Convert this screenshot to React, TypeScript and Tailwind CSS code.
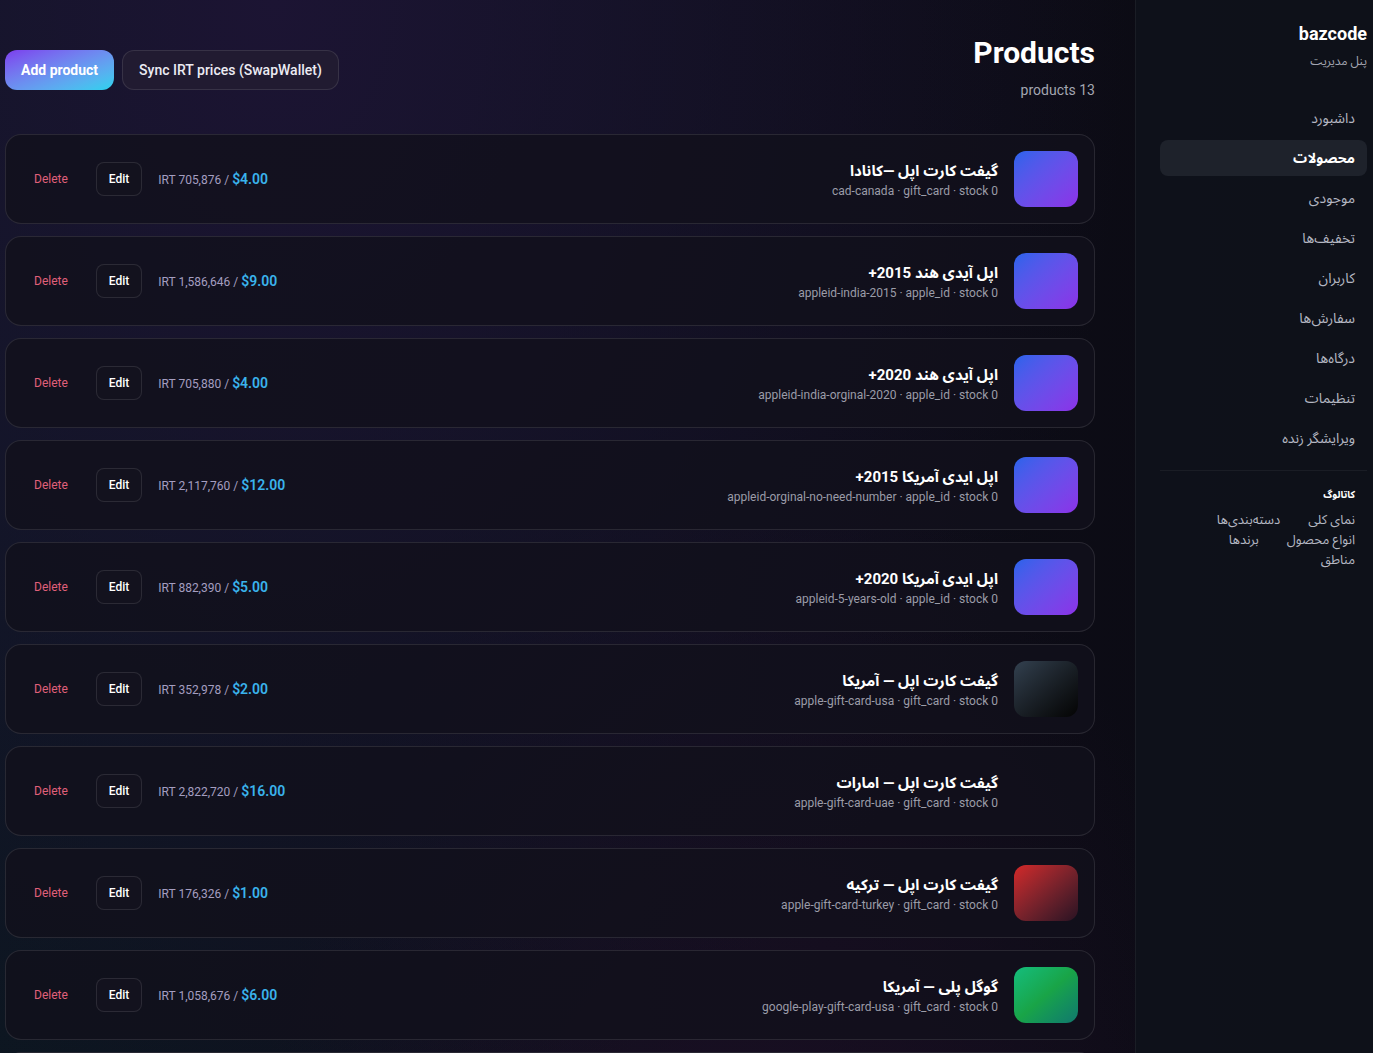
import React from 'react';

type Product = {
  title: string;
  slug: string;
  type: string;
  irt: string;
  usd: string;
  thumb: string | null;
};

const blue = 'bg-linear-to-br from-[#2563eb] to-[#8b31e8]';
const dark = 'bg-linear-to-br from-[#334150] to-[#050505]';
const red = 'bg-linear-to-br from-[#d42828] to-[#2a1222]';
const green = 'bg-linear-to-br from-[#15bd7c] via-[#19a447] to-[#12786c]';

const products: Product[] = [
  { title: 'گیفت کارت اپل —کانادا', slug: 'cad-canada', type: 'gift_card', irt: '705,876', usd: '$4.00', thumb: blue },
  { title: 'اپل آیدی هند 2015+', slug: 'appleid-india-2015', type: 'apple_id', irt: '1,586,646', usd: '$9.00', thumb: blue },
  { title: 'اپل آیدی هند 2020+', slug: 'appleid-india-orginal-2020', type: 'apple_id', irt: '705,880', usd: '$4.00', thumb: blue },
  { title: 'اپل ایدی آمریکا 2015+', slug: 'appleid-orginal-no-need-number', type: 'apple_id', irt: '2,117,760', usd: '$12.00', thumb: blue },
  { title: 'اپل ایدی آمریکا 2020+', slug: 'appleid-5-years-old', type: 'apple_id', irt: '882,390', usd: '$5.00', thumb: blue },
  { title: 'گیفت کارت اپل — آمریکا', slug: 'apple-gift-card-usa', type: 'gift_card', irt: '352,978', usd: '$2.00', thumb: dark },
  { title: 'گیفت کارت اپل — امارات', slug: 'apple-gift-card-uae', type: 'gift_card', irt: '2,822,720', usd: '$16.00', thumb: null },
  { title: 'گیفت کارت اپل — ترکیه', slug: 'apple-gift-card-turkey', type: 'gift_card', irt: '176,326', usd: '$1.00', thumb: red },
  { title: 'گوگل پلی — آمریکا', slug: 'google-play-gift-card-usa', type: 'gift_card', irt: '1,058,676', usd: '$6.00', thumb: green },
  { title: 'گوگل پلی — ترکیه', slug: 'google-play-gift-card-turkey', type: 'gift_card', irt: '352,978', usd: '$2.00', thumb: green },
  { title: 'استیم — آمریکا', slug: 'steam-gift-card-usa', type: 'gift_card', irt: '882,390', usd: '$5.00', thumb: dark },
  { title: 'پلی استیشن — آمریکا', slug: 'psn-gift-card-usa', type: 'gift_card', irt: '1,764,780', usd: '$10.00', thumb: blue },
  { title: 'ایکس باکس — آمریکا', slug: 'xbox-gift-card-usa', type: 'gift_card', irt: '1,764,780', usd: '$10.00', thumb: green },
];

const nav = ['داشبورد', 'محصولات', 'موجودی', 'تخفیف‌ها', 'کاربران', 'سفارش‌ها', 'درگاه‌ها', 'تنظیمات', 'ویرایشگر زنده'];
const catalog = ['نمای کلی', 'دسته‌بندی‌ها', 'انواع محصول', 'برندها', 'مناطق'];

function ProductRow({ p }: { p: Product }) {
  return (
    <div className="flex items-center justify-between rounded-2xl border border-white/10 bg-[#11101c]/80 p-4">
      <div className="flex items-center gap-4">
        <div className={`h-14 w-16 shrink-0 rounded-xl ${p.thumb ?? ''}`} />
        <div>
          <div className="text-[15px] font-bold leading-6 text-white">{p.title}</div>
          <div className="text-xs leading-4 text-[#9b9ca8]">
            {p.slug} · {p.type} · stock 0
          </div>
        </div>
      </div>
      <div dir="ltr" className="flex items-center gap-4">
        <button className="px-3 py-2 text-xs text-[#e0607a]">Delete</button>
        <button className="rounded-lg border border-white/10 bg-[#13121e] px-3 py-2 text-xs font-medium text-white">Edit</button>
        <div className="text-xs text-[#a49ec0]">
          IRT {p.irt} / <span className="text-sm font-semibold text-[#3ab3ec]">{p.usd}</span>
        </div>
      </div>
    </div>
  );
}

export default function App() {
  return (
    <div
      dir="rtl"
      className="flex min-h-screen bg-[radial-gradient(ellipse_at_20%_0%,#1c1433_0%,transparent_55%),radial-gradient(ellipse_at_55%_100%,#1e0f27_0%,transparent_50%),linear-gradient(to_right,#0c1620,#0d0d18_60%,#0b0a12)] font-['Roboto','Noto_Sans_Arabic','DejaVu_Sans',sans-serif]"
    >
      <aside className="w-[238px] shrink-0 border-l border-white/5 bg-[#0e121b]/90 pl-6 pr-[6px] pt-5">
        <div className="text-right">
          <div className="text-lg font-bold leading-7 text-white">bazcode</div>
          <div className="mt-[5px] text-xs text-[#a3a6b1]">پنل مدیریت</div>
        </div>
        <nav className="mt-[31px] space-y-1">
          {nav.map((item) => (
            <div
              key={item}
              className={`rounded-lg px-3 py-2 text-sm ${item === 'محصولات' ? 'bg-[#1e222b] font-bold text-white' : 'text-[#b4b7c2]'}`}
            >
              {item}
            </div>
          ))}
        </nav>
        <div className="mt-3.5 border-t border-white/5 pt-4">
          <div className="px-3 text-[10px] font-bold text-white">کاتالوگ</div>
          <div className="mt-2 flex flex-wrap gap-x-1">
            {catalog.map((c) => (
              <span key={c} className="px-3 text-[13px] leading-5 text-[#b4b7c2]">
                {c}
              </span>
            ))}
          </div>
        </div>
      </aside>

      <main className="flex-1 pb-10 pl-[5px] pr-10 pt-[35px]">
        <div className="flex items-start justify-between">
          <div>
            <h1 className="text-3xl font-bold leading-9 text-white">Products</h1>
            <div className="mt-[9px] text-sm text-[#a3a6b1]">products 13</div>
          </div>
          <div className="mt-[15px] flex items-center gap-2">
            <button className="rounded-xl border border-white/10 bg-[#211b31] px-4 py-[9px] text-sm font-medium text-[#ecebf3]">
              Sync IRT prices (SwapWallet)
            </button>
            <button className="rounded-xl bg-linear-to-br from-[#7c3aed] to-[#22d3ee] px-4 py-2.5 text-sm font-bold text-white">
              Add product
            </button>
          </div>
        </div>

        <div className="mt-[34px] space-y-3">
          {products.map((p) => (
            <ProductRow key={p.slug} p={p} />
          ))}
        </div>
      </main>
    </div>
  );
}
